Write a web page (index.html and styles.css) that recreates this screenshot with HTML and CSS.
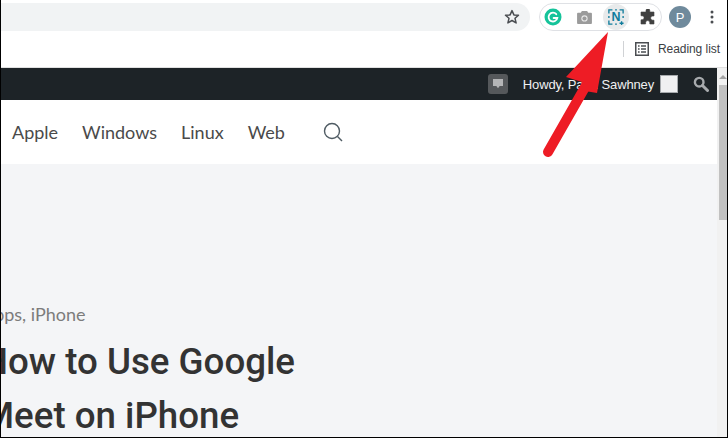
FILE: index.html
```html
<!DOCTYPE html>
<html lang="en">
<head>
  <meta charset="UTF-8">
  <title>How to Use Google Meet on iPhone</title>
  <link rel="stylesheet" href="styles.css">
</head>
<body>
  <div class="window">
    <div class="toolbar">
      <div class="omnibox">
        <svg class="star" width="16" height="16" viewBox="0 0 16 16"><path d="M8 1.6l1.9 4.3 4.6.4-3.5 3 1.1 4.6L8 11.5l-4.1 2.4L5 9.3l-3.5-3 4.6-.4z" fill="none" stroke="#4a4d51" stroke-width="1.5" stroke-linejoin="round"/></svg>
      </div>
      <div class="extensions">
        <span class="ext-slot">
          <svg width="18" height="18" viewBox="0 0 18 18"><circle cx="9" cy="9" r="8.5" fill="#15c39a"/><path d="M12.3 6.2A4.4 4.4 0 1 0 13.3 10H9.6" fill="none" stroke="#fff" stroke-width="1.8" stroke-linecap="round"/></svg>
        </span>
        <span class="ext-slot">
          <svg width="15" height="13" viewBox="0 0 16 14"><path d="M5.2 0h5.600l1.200 2H15a1 1 0 0 1 1 1v10a1 1 0 0 1-1 1H1a1 1 0 0 1-1-1V3a1 1 0 0 1 1-1h3z" fill="#9b9b9b"/><circle cx="8" cy="8" r="3.400" fill="#e8e8e8"/><circle cx="8" cy="8" r="2.200" fill="#9b9b9b"/></svg>
        </span>
        <span class="ext-slot ext-active">
          <svg width="16" height="16" viewBox="0 0 18 18"><path d="M1 5V1h4M13 1h4v4M1 13v4h4M8 17h2M1 8v2M8 1h2M17 8v2" fill="none" stroke="#0f7c9c" stroke-width="1.500"/><path d="M13 16h4.500M15.300 13.800v4.200" stroke="#0f7c9c" stroke-width="1.500"/><text class="ext-letter" x="9" y="14" text-anchor="middle">N</text></svg>
        </span>
        <span class="ext-slot">
          <svg width="16" height="16" viewBox="0 0 16 16"><path d="M6 1.600a1.900 1.900 0 0 1 3.800 0V3H14v4h-1.300a2.100 2.100 0 0 0 0 4.200H14V15H9.800v-1.300a2.100 2.100 0 0 0-4.200 0V15H1v-4.200h1.100a2 2 0 0 0 0-4H1V3h5z" fill="#404040" stroke="#404040" stroke-width=".6" stroke-linejoin="round"/></svg>
        </span>
      </div>
      <span class="avatar">P</span>
      <svg class="menu-dots" width="4" height="14" viewBox="0 0 4 14"><circle cx="2" cy="2" r="1.500"/><circle cx="2" cy="7" r="1.500"/><circle cx="2" cy="12" r="1.500"/></svg>
    </div>

    <div class="bookmarks">
      <span class="divider"></span>
      <svg width="14" height="14" viewBox="0 0 14 14"><rect x=".75" y=".75" width="12.500" height="12.500" fill="none" stroke="#4a4d51" stroke-width="1.500"/><path d="M3 4h1.600M6 4h5M3 7h1.600M6 7h5M3 10h1.600M6 10h5" stroke="#4a4d51" stroke-width="1.300"/></svg>
      <span class="reading">Reading list</span>
    </div>

    <div class="page">
      <div class="content">
        <div class="adminbar">
          <span class="comment-box">
            <svg width="10" height="10" viewBox="0 0 12 12"><path d="M0 0h12v8.500H8L6 11 4 8.500H0z" fill="#b4b5b7"/></svg>
          </span>
          <span class="howdy">Howdy, Parth Sawhney</span>
          <span class="user-box"></span>
          <svg class="admin-search" width="16" height="16" viewBox="0 0 16 16"><circle cx="6.200" cy="6.200" r="4.300" fill="none" stroke="#a7aaad" stroke-width="2.400"/><path d="M9.500 9.500l5 5" stroke="#a7aaad" stroke-width="3" stroke-linecap="round"/></svg>
        </div>
        <nav class="sitenav">
          <a>Apple</a>
          <a>Windows</a>
          <a>Linux</a>
          <a>Web</a>
          <svg class="nav-search" width="20" height="20" viewBox="0 0 20 20"><circle cx="9" cy="9" r="7.500" fill="none" stroke="#4f5b63" stroke-width="1.400"/><path d="M14.500 14.500l4.500 4.500" stroke="#4f5b63" stroke-width="1.400"/></svg>
        </nav>
        <main class="article">
          <p class="cats">Apps, iPhone</p>
          <h1 class="title">How to Use Google<br>Meet on iPhone</h1>
        </main>
      </div>
      <div class="scrollbar">
        <span class="scroll-up"></span>
        <span class="scroll-thumb"></span>
      </div>
    </div>

    <svg class="arrow" width="80" height="130" viewBox="0 0 80 130"><path d="M10 120L50 50" stroke="#ee1c25" stroke-width="10" stroke-linecap="round"/><path d="M70 0L28 45l16 5-3 8 18 3z" fill="#ee1c25"/></svg>
  </div>
</body>
</html>
```

FILE: styles.css
```css
html, body {
  margin: 0;
  padding: 0;
}

body {
  font-family: "Liberation Sans", Arial, sans-serif;
  background-color: #fff;
}

.window {
  position: relative;
  width: 728px;
  height: 438px;
  box-sizing: border-box;
  border-right: 1px solid #000;
  border-bottom: 1px solid #000;
  border-left: 1px solid #000;
  overflow: hidden;
  display: flex;
  flex-direction: column;
}

.toolbar {
  flex: none;
  height: 31px;
  box-sizing: border-box;
  padding-top: 3px;
  display: flex;
  align-items: center;
}

.omnibox {
  width: 529px;
  height: 28px;
  background-color: #f1f3f4;
  border-radius: 0 14px 14px 0;
  display: flex;
  align-items: center;
  justify-content: flex-end;
  padding-right: 10px;
  box-sizing: border-box;
}

.extensions {
  margin-left: 9px;
  width: 123px;
  height: 28px;
  box-sizing: border-box;
  border: 1px solid #dfe1e5;
  border-radius: 14px;
  display: flex;
  align-items: center;
  justify-content: space-between;
}

.ext-slot {
  width: 26px;
  height: 26px;
  display: flex;
  align-items: center;
  justify-content: center;
  border-radius: 50%;
}

.ext-active {
  background-color: #e8eaeb;
}

.ext-letter {
  font-family: "Liberation Sans", Arial, sans-serif;
  font-size: 14px;
  font-weight: bold;
  fill: #0f7c9c;
}

.avatar {
  margin-left: 7px;
  width: 22px;
  height: 22px;
  border-radius: 50%;
  background-color: #6f8a9c;
  color: #fff;
  font-size: 13px;
  display: flex;
  align-items: center;
  justify-content: center;
}

.menu-dots {
  margin-left: 19px;
  fill: #4a4d51;
}

.bookmarks {
  flex: none;
  height: 37px;
  box-sizing: border-box;
  display: flex;
  align-items: center;
  justify-content: flex-end;
  padding-right: 7px;
  padding-bottom: 1px;
}

.divider {
  width: 1px;
  height: 16px;
  background-color: #d0d2d5;
  margin-right: 11px;
}

.reading {
  font-size: 12px;
  letter-spacing: -.05px;
  color: #3c4043;
  margin-left: 9px;
}

.page {
  flex: 1;
  display: flex;
  min-height: 0;
  border-top: 1px solid #e0e0e0;
  margin-top: -1px;
}

.content {
  flex: 1;
  min-width: 0;
  display: flex;
  flex-direction: column;
}

.adminbar {
  flex: none;
  height: 32px;
  background-color: #1d2327;
  color: #f0f0f1;
  display: flex;
  align-items: center;
  justify-content: flex-end;
  padding-right: 8px;
  font-size: 13px;
}

.comment-box {
  width: 20px;
  height: 20px;
  border-radius: 3px;
  background-color: #55585b;
  display: flex;
  align-items: center;
  justify-content: center;
  margin-right: 15px;
}

.howdy {
  margin-right: 6px;
  letter-spacing: -.15px;
}

.user-box {
  width: 16px;
  height: 16px;
  background-color: #f0f0f1;
  border: 1px solid #a7aaad;
  margin-right: 15px;
}

.sitenav {
  flex: none;
  height: 64px;
  background-color: #fff;
  display: flex;
  align-items: center;
  gap: 24px;
  padding-left: 11px;
  font-family: Lato, sans-serif;
  font-size: 18px;
  color: #4a4a4a;
}

.nav-search {
  margin-left: 14px;
}

.article {
  flex: 1;
  min-height: 0;
  background-color: #f4f5f7;
  padding-top: 139px;
  margin-left: -19px;
}

.cats {
  margin: 0 0 10px;
  font-family: Lato, sans-serif;
  font-size: 18px;
  color: #7c7c7c;
}

.title {
  margin: 0;
  font-family: Roboto, sans-serif;
  font-weight: 500;
  font-size: 36.7px;
  line-height: 54px;
  color: #333;
}

.scrollbar {
  flex: none;
  width: 10px;
  box-sizing: border-box;
  padding-left: 2px;
  background-color: #f1f1f1;
  display: flex;
  flex-direction: column;
  align-items: center;
}

.scroll-up {
  margin-top: 7px;
  border-left: 4px solid transparent;
  border-right: 4px solid transparent;
  border-bottom: 4px solid #a3a3a3;
}

.scroll-thumb {
  margin-top: 6px;
  width: 100%;
  height: 135px;
  background-color: #c1c1c1;
}

.arrow {
  position: absolute;
  left: 537px;
  top: 32px;
}
```
